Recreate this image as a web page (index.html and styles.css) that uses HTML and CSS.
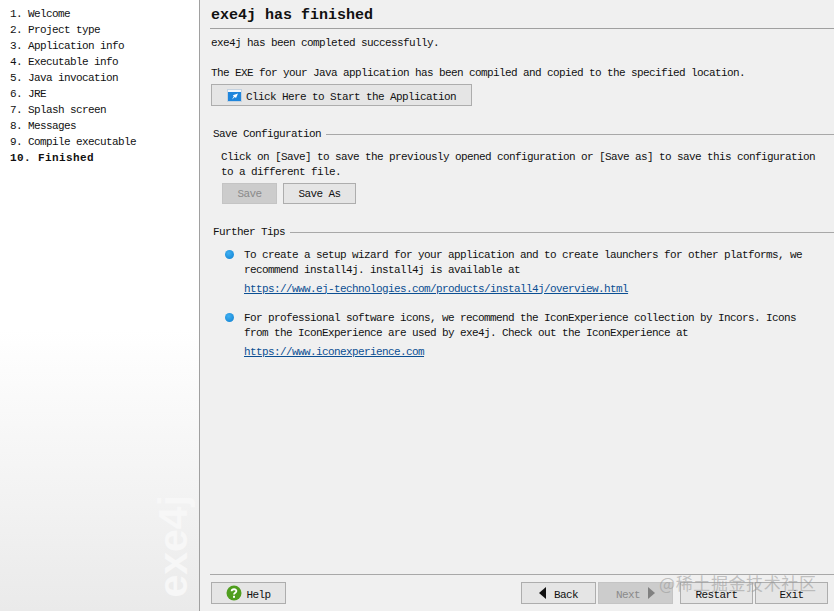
FILE: index.html
```html
<!DOCTYPE html>
<html lang="en">
<head>
  <meta charset="UTF-8">
  <title>exe4j</title>
  <link rel="stylesheet" href="styles.css">
</head>
<body>
  <div class="window">
    <div class="sidebar">
      <ul class="steps">
        <li>1. Welcome</li>
        <li>2. Project type</li>
        <li>3. Application info</li>
        <li>4. Executable info</li>
        <li>5. Java invocation</li>
        <li>6. JRE</li>
        <li>7. Splash screen</li>
        <li>8. Messages</li>
        <li>9. Compile executable</li>
        <li class="current">10. Finished</li>
      </ul>
      <div class="brand">exe4j</div>
    </div>
    <div class="main">
      <h1 class="title">exe4j has finished</h1>
      <div class="content">
        <p class="intro">exe4j has been completed successfully.</p>
        <p class="intro second">The EXE for your Java application has been compiled and copied to the specified location.</p>
        <button class="btn start">
          <svg width="15" height="13" viewBox="0 0 15 13">
            <rect x="0.5" y="0.5" width="14" height="12" fill="#f4f8fc" stroke="#c4d2e0"/>
            <rect x="1" y="3" width="13" height="9" fill="#1f86dc"/>
            <path d="M11 4.5 L9 9 L7.8 8 L5 10.5 L6.8 7.2 L5.8 6.2 Z" fill="#fff"/>
          </svg>
          <span class="label">Click Here to Start the Application</span>
        </button>

        <div class="legend save-legend"><span>Save Configuration</span></div>
        <p class="para">Click on [Save] to save the previously opened configuration or [Save as] to save this configuration<br>to a different file.</p>
        <div class="save-btns">
          <button class="btn disabled save">Save</button>
          <button class="btn save-as">Save As</button>
        </div>

        <div class="legend tips-legend"><span>Further Tips</span></div>
        <div class="tip">
          <i class="dot"></i>
          <div>
            <p>To create a setup wizard for your application and to create launchers for other platforms, we<br>recommend install4j. install4j is available at</p>
            <a href="#">https://www.ej-technologies.com/products/install4j/overview.html</a>
          </div>
        </div>
        <div class="tip">
          <i class="dot"></i>
          <div>
            <p>For professional software icons, we recommend the IconExperience collection by Incors. Icons<br>from the IconExperience are used by exe4j. Check out the IconExperience at</p>
            <a href="#">https://www.iconexperience.com</a>
          </div>
        </div>
      </div>
      <div class="footer">
        <button class="btn help">
          <svg width="16" height="16" viewBox="0 0 16 16">
            <circle cx="8" cy="8" r="7.5" fill="#4f9e1e"/>
            <path d="M5.6 6.2 C5.8 3.6 10.4 3.6 10.4 6.1 C10.4 7.8 8 7.8 8 9.6" fill="none" stroke="#fff" stroke-width="1.8"/>
            <rect x="7" y="10.8" width="2" height="2" fill="#fff"/>
          </svg>
          <span class="label">Help</span>
        </button>
        <div class="nav">
          <button class="btn back"><span class="arrow-left"></span><span class="label">Back</span></button>
          <button class="btn disabled next"><span class="label">Next</span><span class="arrow-right"></span></button>
          <button class="btn restart"><span class="label">Restart</span></button>
          <button class="btn exit"><span class="label">Exit</span></button>
        </div>
      </div>
    </div>
    <div class="watermark">@稀土掘金技术社区</div>
  </div>
</body>
</html>
```

FILE: styles.css
```css
html,body{
  margin : 0;
  padding : 0;
  width : 100%;
  height : 100%;
}
body{
  background : #f0f0f0;
  color : #111;
  font-family : "Liberation Mono", "Noto Sans CJK SC", monospace;
  font-size : 11px;
  letter-spacing : -0.6px;
  line-height : 15px;
}
p{
  margin : 0;
}
.window{
  position : relative;
  display : flex;
  width : 834px;
  height : 611px;
  overflow : hidden;
}

/* left column */
.sidebar{
  position : relative;
  box-sizing : border-box;
  width : 200px;
  border-right : 1px solid #a0a0a0;
  background : linear-gradient(to bottom, #fff 0, #fff 330px, #eaeaea 611px);
}
.steps{
  list-style : none;
  margin : 0;
  padding : 6px 0 0 10px;
}
.steps li{
  height : 16px;
  line-height : 16px;
}
.steps .current{
  font-weight : bold;
  letter-spacing : 0.4px;
}
.brand{
  position : absolute;
  right : 8px;
  bottom : 13px;
  writing-mode : vertical-rl;
  transform : rotate(180deg);
  font-family : "Liberation Sans", sans-serif;
  font-size : 41px;
  font-weight : bold;
  letter-spacing : 0;
  line-height : 36px;
  color : #f7f7f7;
}

/* right column */
.main{
  flex : 1;
  display : flex;
  flex-direction : column;
  padding-left : 10px;
}
.title{
  margin : 0;
  height : 29px;
  box-sizing : border-box;
  padding : 7px 0 0 1px;
  border-bottom : 1px solid #a0a0a0;
  font-size : 15px;
  line-height : 17px;
  letter-spacing : 0;
  font-weight : bold;
}
.content{
  flex : 1;
  padding-left : 1px;
}
.intro{
  margin-top : 7px;
}
.intro.second{
  margin-top : 15px;
}
.btn{
  box-sizing : border-box;
  display : inline-flex;
  align-items : center;
  justify-content : center;
  height : 22px;
  padding : 2px 0 0;
  border : 1px solid #adadad;
  background : #e5e5e5;
  color : #111;
  font : inherit;
  letter-spacing : inherit;
}
.btn.disabled{
  background : #cccccc;
  border-color : #c4c4c4;
  color : #8a8a8a;
}
.start{
  width : 261px;
  margin-top : 3px;
  gap : 4px;
  justify-content : flex-start;
  padding : 0 0 0 15px;
}
.start .label{
  padding-top : 5px;
}
.legend{
  display : flex;
  align-items : center;
  padding-left : 2px;
  gap : 5px;
}
.legend::after{
  content : "";
  flex : 1;
  height : 1px;
  background : #a8a8a8;
}
.save-legend{
  margin-top : 20px;
}
.tips-legend{
  margin-top : 21px;
}
.para{
  margin : 8px 0 0 10px;
}
.save-btns{
  display : flex;
  gap : 6px;
  margin : 3px 0 0 11px;
}
.save-btns .btn{
  height : 21px;
}
.save{
  width : 55px;
}
.save-as{
  width : 73px;
}
.tip{
  display : flex;
  margin : 8px 0 0 14px;
}
.tip + .tip{
  margin-top : 14px;
}
.dot{
  flex : none;
  width : 9px;
  height : 9px;
  margin : 2px 10px 0 0;
  border-radius : 50%;
  background : radial-gradient(circle at 40% 35%, #3fb0f2, #0f7fd0);
}
.tip a{
  display : block;
  margin-top : 4px;
  color : #0b4f93;
  text-decoration : underline;
}

/* bottom buttons */
.footer{
  display : flex;
  justify-content : space-between;
  height : 37px;
  box-sizing : border-box;
  padding : 7px 6px 0 1px;
  border-top : 1px solid #a8a8a8;
}
.nav{
  display : flex;
}
.footer .btn{
  padding-top : 0;
}
.footer .label{
  padding-top : 4px;
}
.help{
  width : 75px;
  gap : 4px;
}
.back,
.next{
  width : 75px;
  gap : 8px;
}
.next{
  margin-left : 2px;
}
.restart{
  width : 73px;
  margin-left : 7px;
}
.exit{
  width : 73px;
  margin-left : 2px;
}
.arrow-left{
  width : 0;
  height : 0;
  border : 6px solid transparent;
  border-left : 0;
  border-right : 7px solid #111;
}
.arrow-right{
  width : 0;
  height : 0;
  border : 6px solid transparent;
  border-right : 0;
  border-left : 7px solid #808080;
}

/* site watermark lying over the buttons */
.watermark{
  position : absolute;
  left : 659px;
  top : 572px;
  font-family : "Noto Sans CJK SC", sans-serif;
  font-size : 17px;
  line-height : 22px;
  letter-spacing : 0.6px;
  color : rgba(150,150,150,.55);
}
```
